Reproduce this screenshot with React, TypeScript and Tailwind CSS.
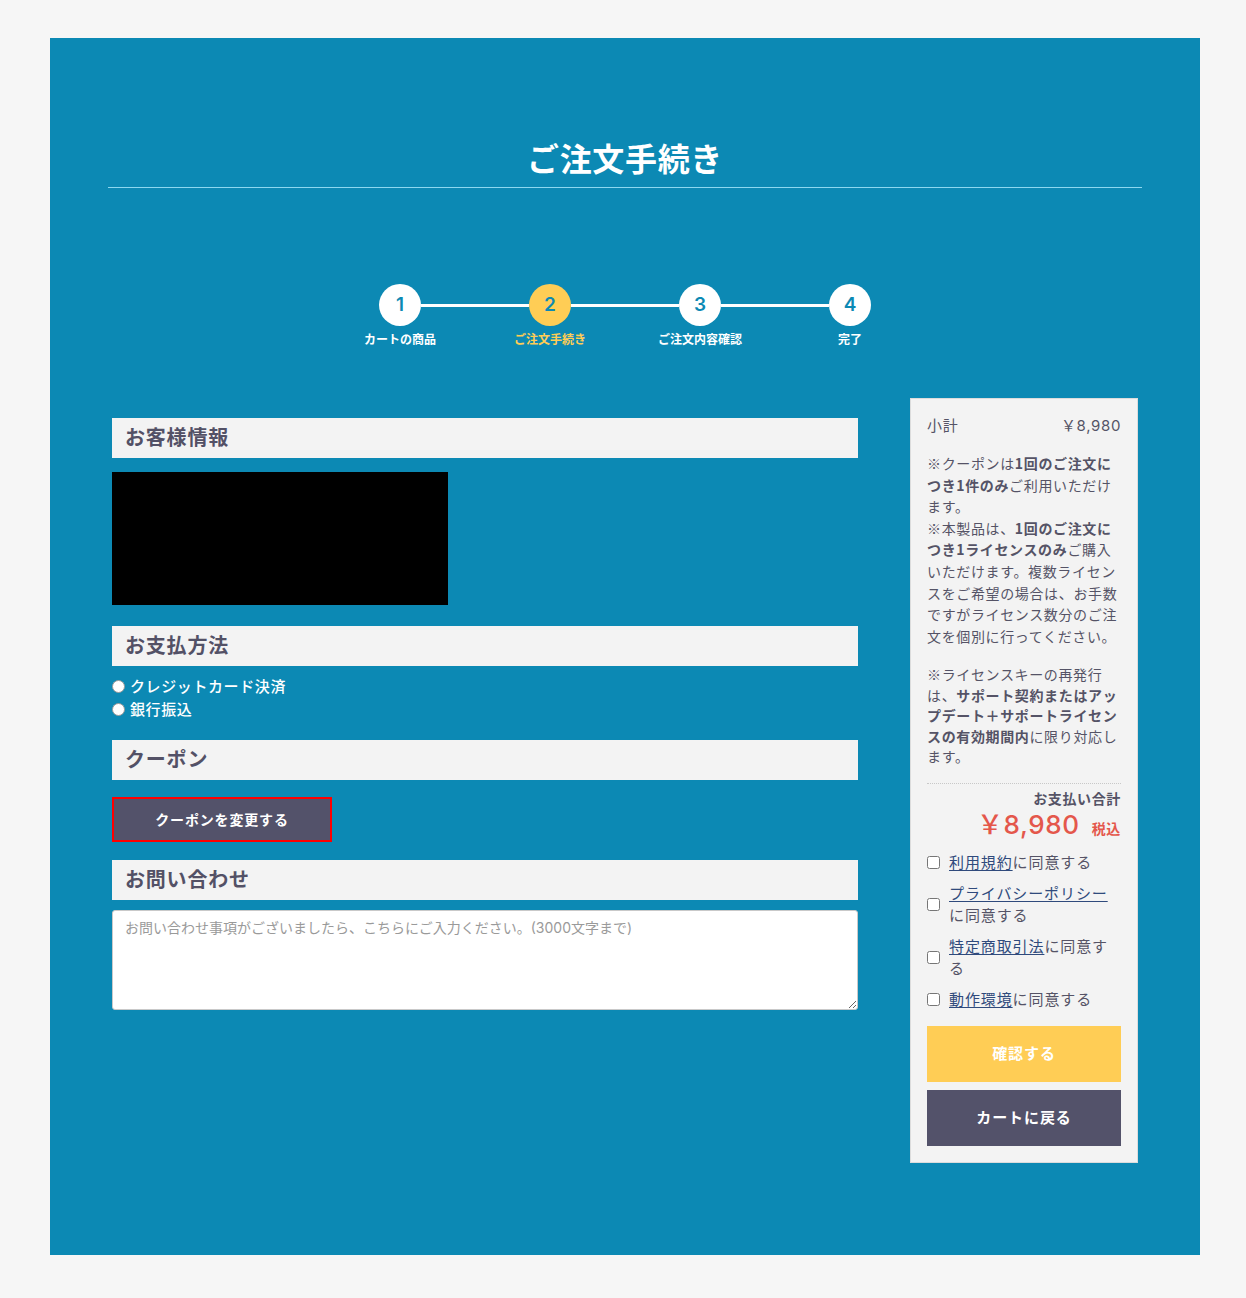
import React from "react";

const steps = [
  { no: "1", label: "カートの商品" },
  { no: "2", label: "ご注文手続き", active: true },
  { no: "3", label: "ご注文内容確認" },
  { no: "4", label: "完了" },
];

const agreements = [
  { link: "利用規約", rest: "に同意する" },
  { link: "プライバシーポリシー", rest: "に同意する" },
  { link: "特定商取引法", rest: "に同意する" },
  { link: "動作環境", rest: "に同意する" },
];

const jp = { fontFamily: '"Noto Sans CJK JP", sans-serif' };

function SectionTitle({ children }: { children: React.ReactNode }) {
  return (
    <h3 className="flex h-[40px] items-center bg-[#f3f3f3] pl-[13px] text-[20px] font-bold tracking-[0.04em] text-[#535166]">
      {children}
    </h3>
  );
}

function Stepper() {
  return (
    <div className="mt-[96px] flex flex-col items-center">
      <div className="flex items-center">
        {steps.map((step, i) => (
          <React.Fragment key={step.no}>
            {i > 0 ? <div className="h-[3px] w-[108px] bg-white" /> : null}
            <div
              className={`flex h-[42px] w-[42px] items-center justify-center rounded-full text-[19px] font-semibold text-[#0c89b4] ${
                step.active ? "bg-[#ffcd55]" : "bg-white"
              }`}
            >
              {step.no}
            </div>
          </React.Fragment>
        ))}
      </div>
      <div className="mt-[5px] flex">
        {steps.map((step) => (
          <div
            key={step.no}
            className={`w-[150px] text-center text-[12px] font-bold leading-[18px] ${step.active ? "text-[#ffcd55]" : "text-white"}`}
          >
            {step.label}
          </div>
        ))}
      </div>
    </div>
  );
}

function Summary() {
  return (
    <aside className="w-[228px] shrink-0 border border-[#dcdcdc] bg-[#f3f3f3] px-[16px] pb-[16px] pt-[16px] tracking-[0.04em] text-[#555366]">
      <div className="flex justify-between text-[15px] leading-[22px]">
        <span>小計</span>
        <span>￥8,980</span>
      </div>
      <div className="mt-[16px] text-[14px]" style={jp}>
        <p className="leading-[21.6px]">
          ※クーポンは<b>1回のご注文につき1件のみ</b>ご利用いただけます。
          <br />
          ※本製品は、<b>1回のご注文につき1ライセンスのみ</b>ご購入いただけます。複数ライセンスをご希望の場合は、お手数ですがライセンス数分のご注文を個別に行ってください。
        </p>
        <p className="mt-[17px] leading-[20.5px]">
          ※ライセンスキーの再発行は、<b>サポート契約またはアップデート＋サポートライセンスの有効期間内</b>に限り対応します。
        </p>
      </div>
      <div className="mt-[16px] border-t border-dotted border-[#c8c8c8] pt-[5px] text-right">
        <div className="text-[14px] font-bold leading-[20px]">お支払い合計</div>
        <div className="flex items-baseline justify-end leading-[32px] text-[#e4574b]">
          <span className="text-[26px] font-medium">￥8,980</span>
          <span className="ml-[12px] text-[14px] font-bold">税込</span>
        </div>
      </div>
      <div className="mt-[7px] flex flex-col gap-[9px]">
        {agreements.map((a) => (
          <label key={a.link} className="flex items-center text-[15px] leading-[22px] tracking-[0.06em]">
            <input type="checkbox" className="h-[13px] w-[13px] shrink-0 accent-[#53526a]" />
            <span className="ml-[9px]">
              <a className="text-[#2f4a7c] underline underline-offset-2">{a.link}</a>
              {a.rest}
            </span>
          </label>
        ))}
      </div>
      <button className="mt-[15px] flex h-[56px] w-full items-center justify-center bg-[#ffcd55] text-[15px] font-bold tracking-[0.06em] text-white">
        確認する
      </button>
      <button className="mt-[8px] flex h-[56px] w-full items-center justify-center bg-[#53526a] text-[15px] font-bold tracking-[0.06em] text-white">
        カートに戻る
      </button>
    </aside>
  );
}

export default function App() {
  return (
    <div
      className="min-h-[1298px] bg-[#f6f6f6] pb-[43px] pl-[50px] pt-[38px]"
      style={{ fontFamily: 'Inter, "Noto Sans CJK JP", sans-serif' }}
    >
      <div className="h-[1217px] w-[1150px] bg-[#0c89b4] px-[58px] pt-[98px]">
        <h1 className="border-b border-[#8dd8f0] pb-[3px] text-center text-[32px] font-bold leading-[48px] tracking-[0.02em] text-white">
          ご注文手続き
        </h1>
        <Stepper />
        <div className="mt-[49px] flex items-start gap-[52px] px-[4px]">
          <div className="mt-[20px] w-[746px] shrink-0">
            <SectionTitle>お客様情報</SectionTitle>
            <div className="mt-[14px] h-[133px] w-[336px] bg-black" />

            <div className="mt-[21px]">
              <SectionTitle>お支払方法</SectionTitle>
            </div>
            <div className="mt-[9px] flex flex-col text-[15px] font-medium leading-[23px] tracking-[0.04em] text-white">
              <label className="flex items-center">
                <span className="h-[13px] w-[13px] rounded-full border border-[#9a9a9a] bg-white" />
                <span className="ml-[5px]">クレジットカード決済</span>
              </label>
              <label className="flex items-center">
                <span className="h-[13px] w-[13px] rounded-full border border-[#9a9a9a] bg-white" />
                <span className="ml-[5px]">銀行振込</span>
              </label>
            </div>

            <div className="mt-[19px]">
              <SectionTitle>クーポン</SectionTitle>
            </div>
            <button className="mt-[17px] flex h-[45px] w-[220px] items-center justify-center border-2 border-[#ff0000] bg-[#53526a] text-[14px] font-bold tracking-[0.06em] text-white">
              クーポンを変更する
            </button>

            <div className="mt-[18px]">
              <SectionTitle>お問い合わせ</SectionTitle>
            </div>
            <textarea
              className="mt-[10px] block h-[100px] w-full rounded-[3px] border border-[#c9c9c9] bg-white px-[12px] py-[7px] text-[14px] leading-[20px] text-[#555] placeholder:text-[#9a9a9a]"
              placeholder="お問い合わせ事項がございましたら、こちらにご入力ください。(3000文字まで)"
            />
          </div>
          <Summary />
        </div>
      </div>
    </div>
  );
}
